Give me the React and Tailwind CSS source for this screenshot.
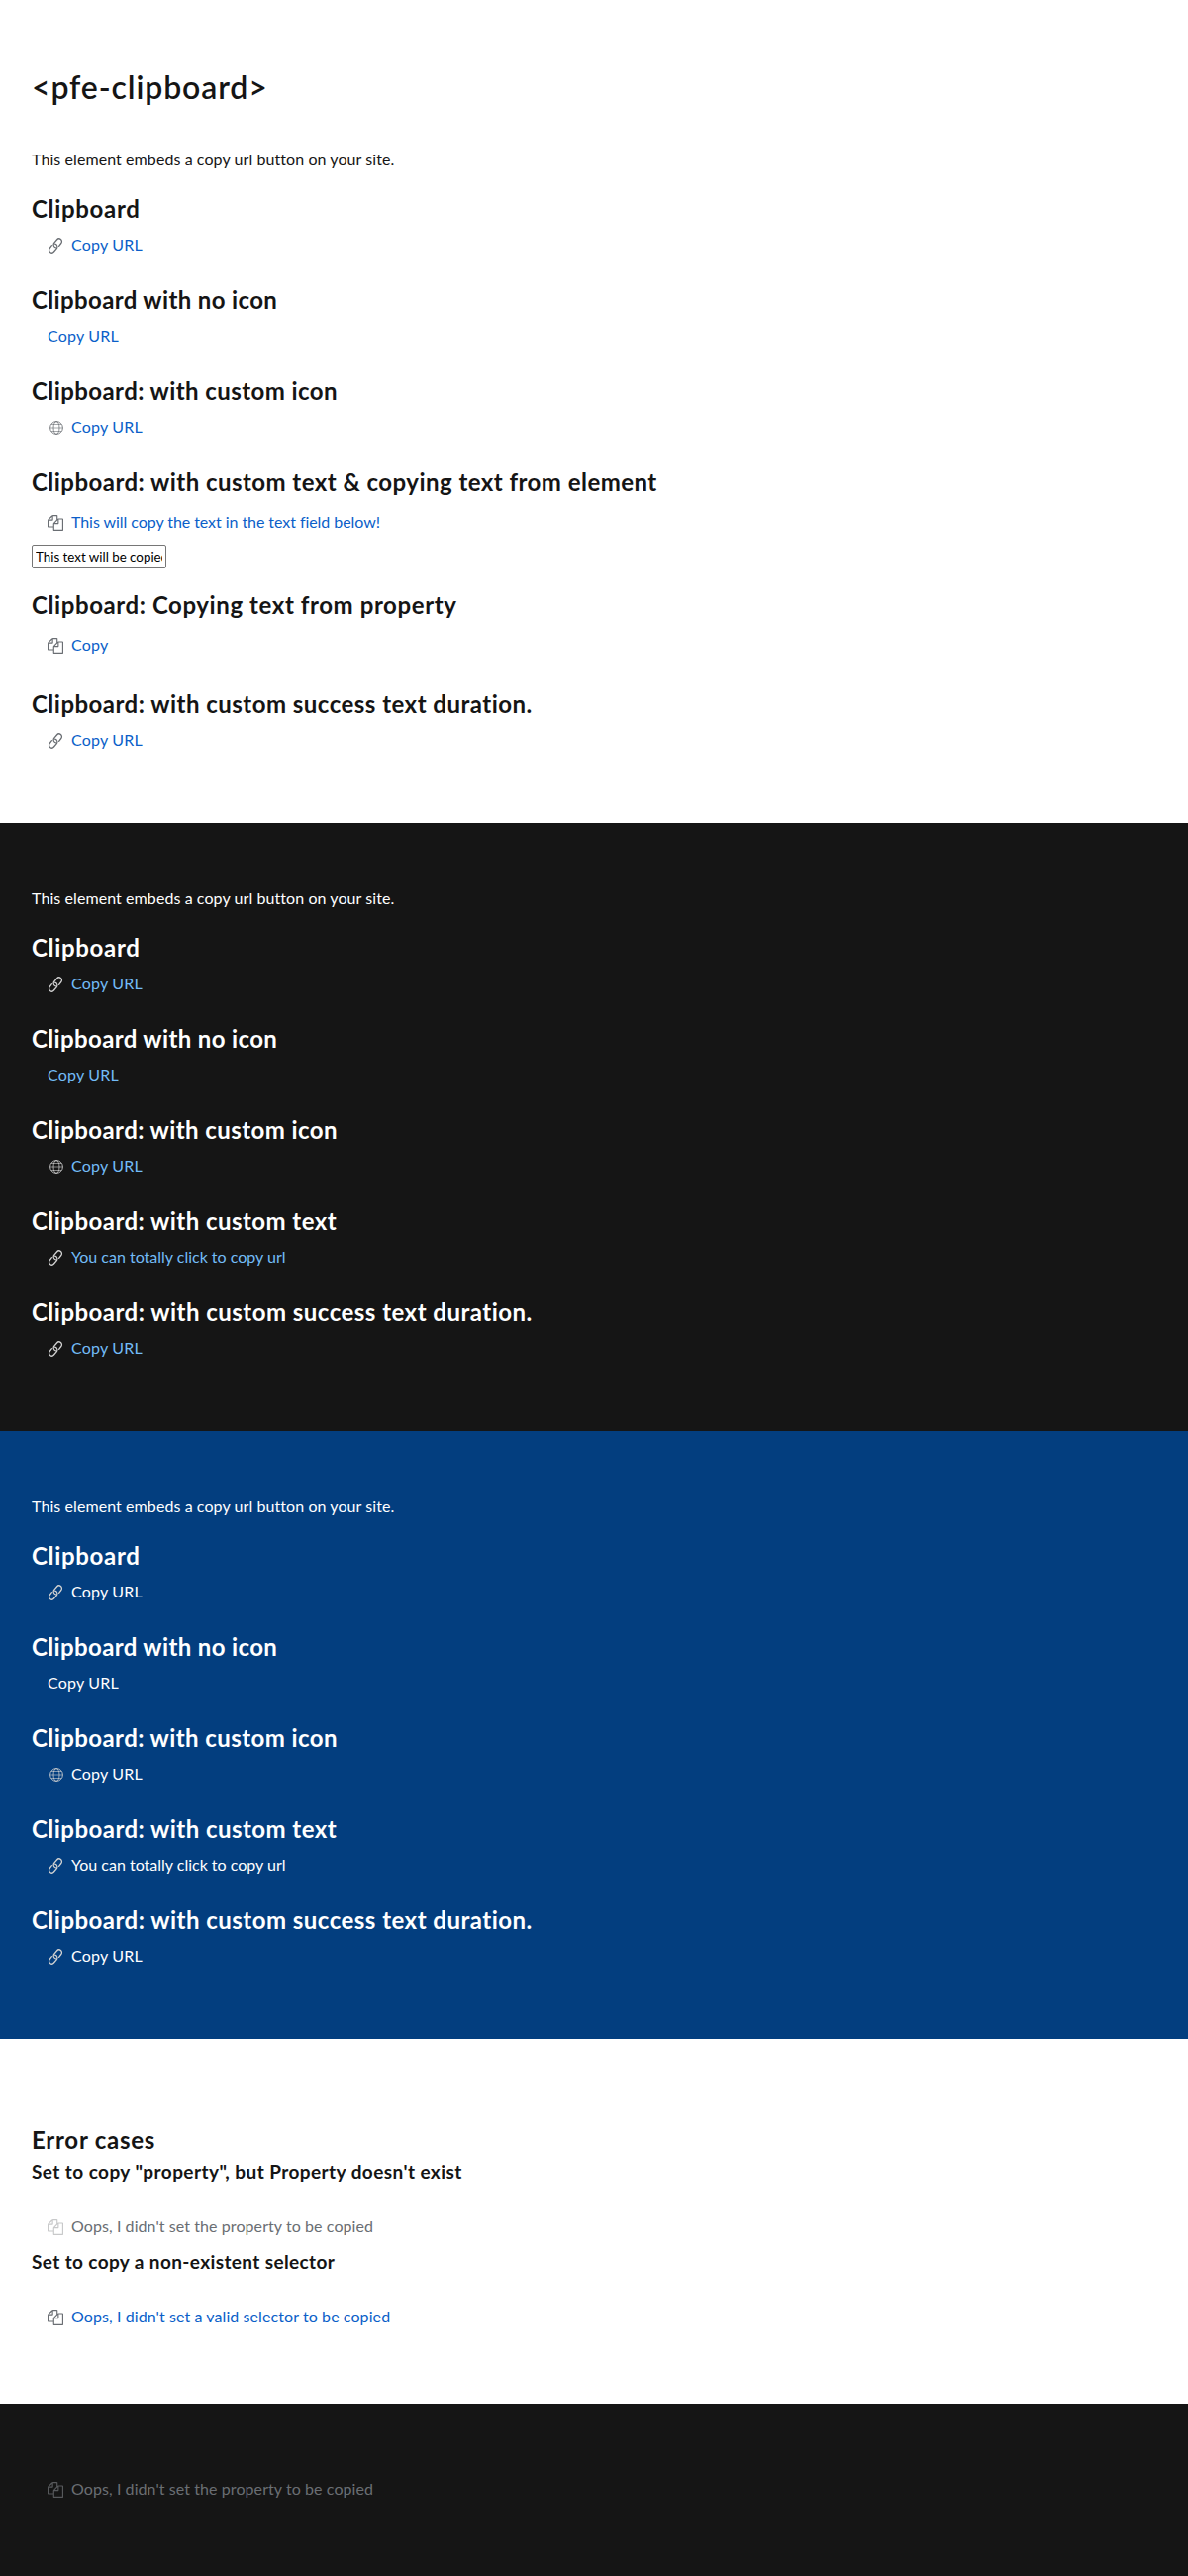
const linkHalf = "M8.4 9.8C6.1 9.3 5.5 6.8 6.8 5.2L9.5 2a2.75 2.75 0 0 1 4.3 3.5L11.6 8.3";

const LinkIcon = () => (
  <svg viewBox="0 0 16 16" className="mt-[5px] h-4 w-4" fill="none" stroke="currentColor" strokeWidth="1.3" strokeLinecap="round">
    <path d={linkHalf} />
    <path d={linkHalf} transform="rotate(180 8 8)" />
  </svg>
);

const GlobeIcon = () => (
  <svg viewBox="0 0 14 14" className="mt-1.5 ml-0.5 h-3.5 w-3.5" fill="none" stroke="currentColor" strokeWidth="0.85">
    <circle cx="7" cy="7" r="6.4" />
    <ellipse cx="7" cy="7" rx="3" ry="6.4" strokeWidth="0.75" />
    <path d="M0.6 7H13.4M1.8 3.5H12.2M1.8 10.5H12.2" strokeWidth="0.6" />
  </svg>
);

const CopyIcon = () => (
  <svg viewBox="0 0 1792 1792" className="mt-[5px] h-4 w-4" fill="currentColor">
    <path d="M1696 384q40 0 68 28t28 68v1216q0 40-28 68t-68 28h-960q-40 0-68-28t-28-68v-288h-544q-40 0-68-28t-28-68v-672q0-40 20-88t48-76l408-408q28-28 76-48t88-20h416q40 0 68 28t28 68v328q68-40 128-40h416zm-544 213l-299 299h299v-299zm-640-384l-299 299h299v-299zm196 647l316-316v-416h-384v416q0 40-28 68t-68 28h-416v640h512v-256q0-40 20-88t48-76zm956 804v-1152h-384v416q0 40-28 68t-68 28h-416v640h896z" />
  </svg>
);

const icons = { link: LinkIcon, globe: GlobeIcon, copy: CopyIcon };

const themes = {
  light: { icon: "text-[#6a6e73]", link: "text-[#0b5fc9]" },
  dark: { icon: "text-[#d2d2d2]", link: "text-[#73bcf7]" },
  blue: { icon: "text-[#d2d2d2]", link: "text-white" },
  disabledLight: { icon: "text-[#c8c9ca]", link: "text-[#6a6e73]" },
  disabledDark: { icon: "text-[#57595c]", link: "text-[#6a6e73]" },
};

function Clipboard({ icon, theme, className = "", tracking = "tracking-[0.2px]", children }) {
  const Icon = icons[icon];
  const t = themes[theme];
  return (
    <button type="button" className={`flex h-6 items-start pl-4 text-base leading-6 ${className}`}>
      {Icon && (
        <span className={`mr-2 block h-6 w-4 shrink-0 ${t.icon}`}>
          <Icon />
        </span>
      )}
      <span className={`whitespace-nowrap ${t.link} ${tracking}`}>{children}</span>
    </button>
  );
}

const H2 = ({ className = "", children }) => (
  <h2 className={`h-[29px] text-2xl leading-[29px] font-bold whitespace-nowrap ${className}`}>{children}</h2>
);

const H4 = ({ className = "", children }) => (
  <h4 className={`h-[23px] text-[19px] leading-[23px] font-bold whitespace-nowrap ${className}`}>{children}</h4>
);

const Intro = () => (
  <p className="mb-[23px] text-base leading-6 tracking-[0.08px]">This element embeds a copy url button on your site.</p>
);

function CommonDemos({ theme }) {
  return (
    <>
      <H2 className="tracking-[0.68px]">Clipboard</H2>
      <Clipboard icon="link" theme={theme} className="mt-2.5 mb-[29px]">Copy URL</Clipboard>
      <H2 className="tracking-[0.36px]">Clipboard with no icon</H2>
      <Clipboard theme={theme} className="mt-2.5 mb-[29px]">Copy URL</Clipboard>
      <H2 className="tracking-[0.42px]">Clipboard: with custom icon</H2>
      <Clipboard icon="globe" theme={theme} className="mt-2.5 mb-[29px]">Copy URL</Clipboard>
    </>
  );
}

function Duration({ theme }) {
  return (
    <>
      <H2 className="tracking-[0.48px]">Clipboard: with custom success text duration.</H2>
      <Clipboard icon="link" theme={theme} className="mt-2.5">Copy URL</Clipboard>
    </>
  );
}

function ThemedSection({ theme, bg }) {
  return (
    <section className={`h-[614px] px-8 pt-16 text-white ${bg}`}>
      <Intro />
      <CommonDemos theme={theme} />
      <H2 className="tracking-[0.46px]">Clipboard: with custom text</H2>
      <Clipboard icon="link" theme={theme} className="mt-2.5 mb-[29px]" tracking="tracking-normal">
        You can totally click to copy url
      </Clipboard>
      <Duration theme={theme} />
    </section>
  );
}

export default function App() {
  return (
    <main className="bg-white font-['Lato',sans-serif] text-[#151515]">
      <section className="h-[831px] px-8 pt-[69px]">
        <h1 className="mb-[42px] text-[32px] leading-[38px] font-semibold tracking-[0.88px]">&lt;pfe-clipboard&gt;</h1>
        <Intro />
        <CommonDemos theme="light" />
        <H2 className="tracking-[0.46px]">Clipboard: with custom text &amp; copying text from element</H2>
        <Clipboard icon="copy" theme="light" className="mt-3.5" tracking="tracking-[-0.06px]">
          This will copy the text in the text field below!
        </Clipboard>
        <input
          type="text"
          defaultValue="This text will be copied"
          className="mt-[11px] mb-[22px] block h-6 w-[136px] rounded-xs border border-[#767676] bg-white px-[3px] text-[13.33px] text-black"
        />
        <H2 className="tracking-[0.59px]">Clipboard: Copying text from property</H2>
        <Clipboard icon="copy" theme="light" className="mt-3.5 mb-[33px]">Copy</Clipboard>
        <Duration theme="light" />
      </section>

      <ThemedSection theme="dark" bg="bg-[#151515]" />
      <ThemedSection theme="blue" bg="bg-[#033e7f]" />

      <section className="h-[368px] px-8 pt-[87px]">
        <H2 className="tracking-[0.75px]">Error cases</H2>
        <H4 className="mt-1.5 tracking-[0.43px]">Set to copy "property", but Property doesn't exist</H4>
        <Clipboard icon="copy" theme="disabledLight" className="mt-8" tracking="tracking-[0.08px]">
          Oops, I didn't set the property to be copied
        </Clipboard>
        <H4 className="mt-3 tracking-[0.38px]">Set to copy a non-existent selector</H4>
        <Clipboard icon="copy" theme="light" className="mt-8" tracking="tracking-[0.09px]">
          Oops, I didn't set a valid selector to be copied
        </Clipboard>
      </section>

      <section className="h-[174px] bg-[#151515] px-8 pt-[74px]">
        <Clipboard icon="copy" theme="disabledDark" tracking="tracking-[0.08px]">
          Oops, I didn't set the property to be copied
        </Clipboard>
      </section>
    </main>
  );
}
